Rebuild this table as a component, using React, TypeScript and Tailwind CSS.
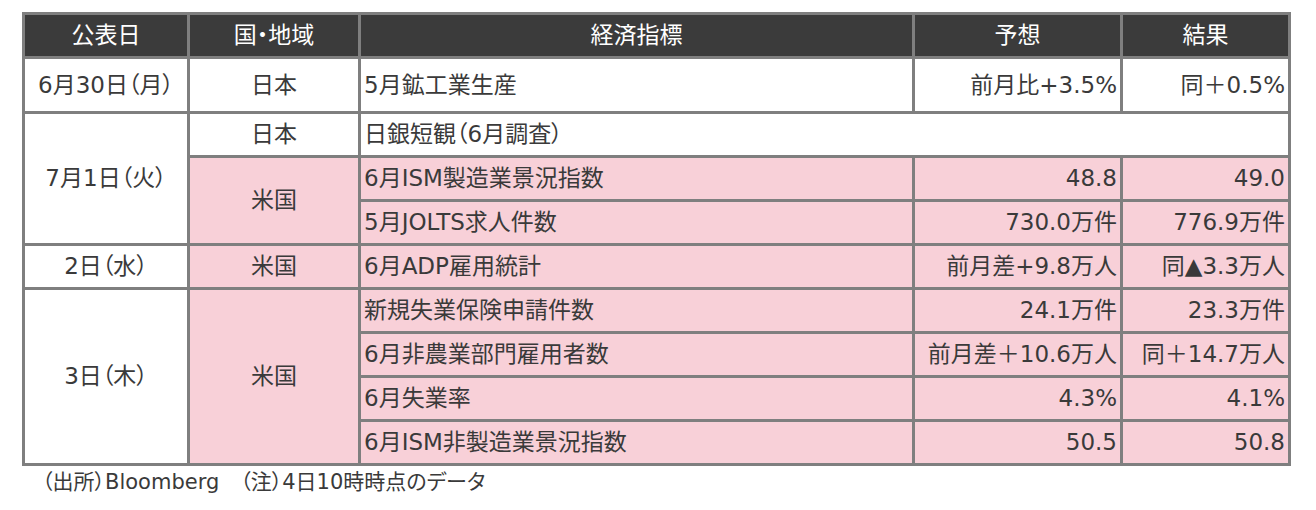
const font = { fontFamily: '"DejaVu Sans", "Noto Sans CJK JP", sans-serif', fontFeatureSettings: '"palt"' };

type Row = { name: string; forecast?: string; result?: string; pink: boolean };

const head = ["公表日", "国・地域", "経済指標", "予想", "結果"];

// rows 2..10 of the grid (row 1 is the header)
const rows: Row[] = [
  { name: "5月鉱工業生産", forecast: "前月比+3.5%", result: "同＋0.5%", pink: false },
  { name: "日銀短観（6月調査）", pink: false },
  { name: "6月ISM製造業景況指数", forecast: "48.8", result: "49.0", pink: true },
  { name: "5月JOLTS求人件数", forecast: "730.0万件", result: "776.9万件", pink: true },
  { name: "6月ADP雇用統計", forecast: "前月差+9.8万人", result: "同▲3.3万人", pink: true },
  { name: "新規失業保険申請件数", forecast: "24.1万件", result: "23.3万件", pink: true },
  { name: "6月非農業部門雇用者数", forecast: "前月差＋10.6万人", result: "同＋14.7万人", pink: true },
  { name: "6月失業率", forecast: "4.3%", result: "4.1%", pink: true },
  { name: "6月ISM非製造業景況指数", forecast: "50.5", result: "50.8", pink: true },
];

const cell = "flex items-center whitespace-nowrap text-[23px] leading-none";
const pink = "bg-[#f8d0d8]";

export default function App() {
  return (
    <div className="h-[510px] w-[1316px] bg-white text-[#3a3a3a]" style={font}>
      <div className="ml-[22px] pt-[12px]">
        <div className="grid w-fit grid-cols-[162px_168px_551px_205px_165px] grid-rows-[41px_52px_repeat(8,41px)] gap-[3px] bg-[#7f7f7f] p-[3px]">
          {head.map((h) => (
            <div key={h} className={`${cell} justify-center bg-[#3b3b3b] text-white`}>
              {h}
            </div>
          ))}

          {/* 公表日 */}
          <div className={`${cell} col-start-1 row-start-2 justify-center bg-white`}>6月30日（月）</div>
          <div className={`${cell} col-start-1 row-start-3 row-span-3 justify-center bg-white`}>7月1日（火）</div>
          <div className={`${cell} col-start-1 row-start-6 justify-center bg-white`}>2日（水）</div>
          <div className={`${cell} col-start-1 row-start-7 row-span-4 justify-center bg-white`}>3日（木）</div>

          {/* 国・地域 */}
          <div className={`${cell} col-start-2 row-start-2 justify-center bg-white`}>日本</div>
          <div className={`${cell} col-start-2 row-start-3 justify-center bg-white`}>日本</div>
          <div className={`${cell} col-start-2 row-start-4 row-span-2 justify-center ${pink}`}>米国</div>
          <div className={`${cell} col-start-2 row-start-6 justify-center ${pink}`}>米国</div>
          <div className={`${cell} col-start-2 row-start-7 row-span-4 justify-center ${pink}`}>米国</div>

          {rows.map((r, i) => {
            const bg = r.pink ? pink : "bg-white";
            if (r.forecast === undefined)
              return (
                <div key={r.name} className={`${cell} col-start-3 col-span-3 ${bg} pl-[3px]`} style={{ gridRowStart: i + 2 }}>
                  {r.name}
                </div>
              );
            return [
              <div key={r.name} className={`${cell} col-start-3 ${bg} pl-[3px]`} style={{ gridRowStart: i + 2 }}>
                {r.name}
              </div>,
              <div key={r.name + "f"} className={`${cell} col-start-4 justify-end ${bg} pr-[3px]`} style={{ gridRowStart: i + 2 }}>
                {r.forecast}
              </div>,
              <div key={r.name + "r"} className={`${cell} col-start-5 justify-end ${bg} pr-[3px]`} style={{ gridRowStart: i + 2 }}>
                {r.result}
              </div>,
            ];
          })}
        </div>
        <p className="mt-[3px] pl-[20px] text-[21px] leading-[26px]">（出所）Bloomberg　（注）4日10時時点のデータ</p>
      </div>
    </div>
  );
}
